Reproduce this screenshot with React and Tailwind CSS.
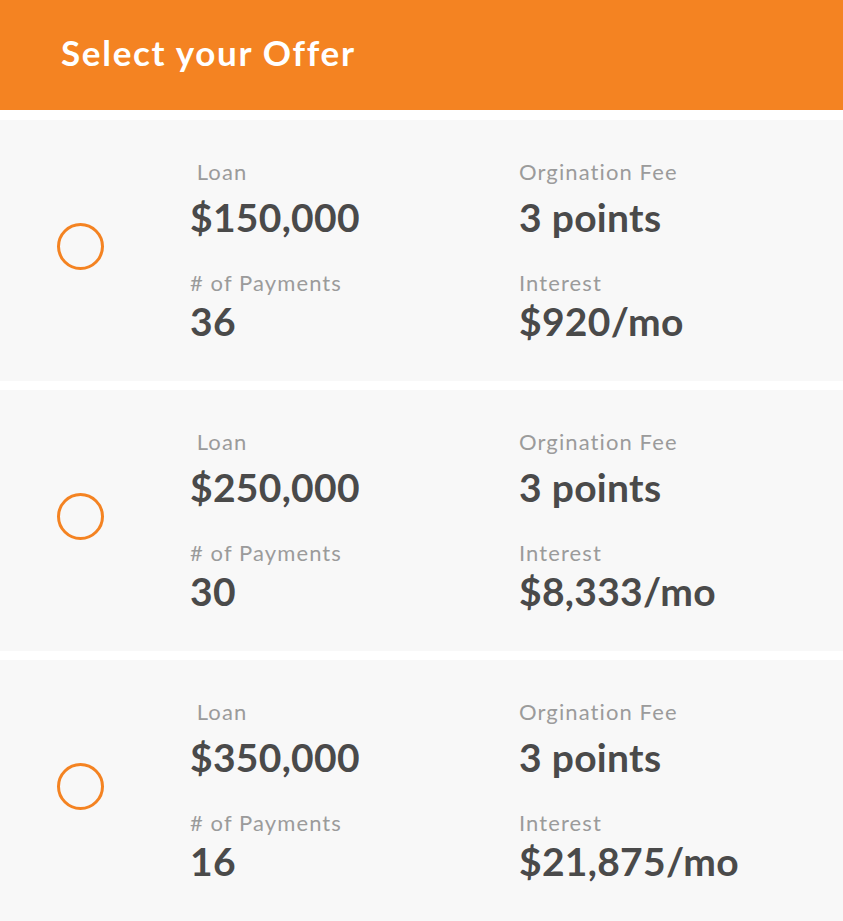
import React from 'react';

const offers = [
    { loan: '$150,000', fee: '3 points', payments: '36', interest: '$920/mo' },
    { loan: '$250,000', fee: '3 points', payments: '30', interest: '$8,333/mo' },
    { loan: '$350,000', fee: '3 points', payments: '16', interest: '$21,875/mo' },
];

const Label = ({ children, className = '' }) => (
    <div className={`text-[22px] leading-[26px] tracking-[1.1px] text-[#9b9b9b] ${className}`}>{children}</div>
);

const Value = ({ children, className = '' }) => (
    <div className={`text-[39px] leading-[44px] tracking-[0.3px] font-bold text-[#4a4a4a] ${className}`}>{children}</div>
);

const OfferCard = ({ offer }) => (
    <div className="h-[261px] bg-[#f8f8f8] flex items-center pl-[57px]">
        <div className="w-[47px] h-[47px] rounded-full border-[3px] border-[#f48322] shrink-0 mb-[8px]" />
        <div className="grid grid-cols-[329px_1fr] ml-[86px]">
            <div>
                <Label>{'\u00a0'}Loan</Label>
                <Value className="mt-[10px]">{offer.loan}</Value>
                <Label className="mt-[31px]"># of Payments</Label>
                <Value className="mt-[3px]">{offer.payments}</Value>
            </div>
            <div>
                <Label>Orgination Fee</Label>
                <Value className="mt-[10px]">{offer.fee}</Value>
                <Label className="mt-[31px]">Interest</Label>
                <Value className="mt-[3px]">{offer.interest}</Value>
            </div>
        </div>
    </div>
);

const App = () => {
    return (
        <div className="w-[843px] h-[921px] overflow-hidden bg-white" style={{ fontFamily: 'Lato, "Open Sans", sans-serif' }}>
            <div className="h-[110px] bg-[#f48322] flex items-center pl-[61px] pb-[5px]">
                <h1 className="text-[35px] tracking-[1.7px] font-bold text-white">Select your Offer</h1>
            </div>
            <div className="mt-[10px] flex flex-col gap-[9px]">
                {offers.map((offer) => (
                    <OfferCard key={offer.loan} offer={offer} />
                ))}
            </div>
        </div>
    );
};

export default App;
